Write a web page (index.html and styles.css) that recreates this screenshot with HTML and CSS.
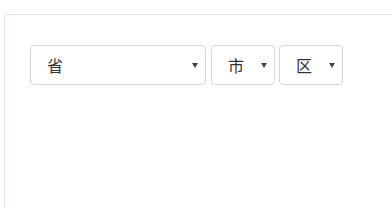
FILE: index.html
```html
<!DOCTYPE html>
<html lang="zh-CN">
<head>
    <meta charset="UTF-8">
    <meta name="viewport" content="width=device-width, initial-scale=1.0">
    <title>省市区</title>
    <link rel="stylesheet" href="styles.css">
</head>
<body>
    <div class="panel">
        <div class="picker">
            <span class="select-wrap province">
                <select class="select">
                    <option>省</option>
                </select>
            </span>
            <span class="select-wrap city">
                <select class="select">
                    <option>市</option>
                </select>
            </span>
            <span class="select-wrap area">
                <select class="select">
                    <option>区</option>
                </select>
            </span>
        </div>
    </div>
</body>
</html>
```

FILE: styles.css
```css
html, body {
    margin: 0;
    height: 100%;
    overflow: hidden;
    background-color: #fff;
    font-family: "Noto Sans CJK SC", "Noto Sans", sans-serif;
}

body {
    padding: 14px 0 0 4px;
    box-sizing: border-box;
}

.panel {
    height: 100%;
    border-top: 1px solid #d8e6f1;
    border-left: 1px solid #d8e6f1;
    border-top-left-radius: 4px;
    padding: 30px 0 0 25px;
    box-sizing: border-box;
}

.picker {
    display: flex;
    gap: 5px;
}

.select-wrap {
    position: relative;
    display: block;
}

.select-wrap::after {
    content: "";
    position: absolute;
    right: 8px;
    top: 18px;
    border-left: 3px solid transparent;
    border-right: 3px solid transparent;
    border-top: 5px solid #444;
    pointer-events: none;
}

.select {
    appearance: none;
    -webkit-appearance: none;
    display: block;
    height: 40px;
    margin: 0;
    padding: 0 0 0 16px;
    border: 1px solid #d6d6d6;
    border-radius: 4px;
    background-color: #fff;
    color: #333;
    font-family: "Noto Sans CJK SC", "Noto Sans", sans-serif;
    font-size: 16px;
    box-sizing: border-box;
}

.province .select {
    width: 176px;
}

.city .select,
.area .select {
    width: 64px;
}

.area {
    margin-left: -1px;
}
```
